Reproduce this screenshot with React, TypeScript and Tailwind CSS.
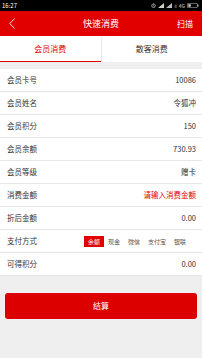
import React from 'react';

const FONT = { fontFamily: '"Noto Sans CJK SC", "Noto Sans", sans-serif' };

const rows: { label: string; value: string; hint?: boolean; pay?: boolean }[] = [
  { label: '会员卡号', value: '10086' },
  { label: '会员姓名', value: '令狐冲' },
  { label: '会员积分', value: '150' },
  { label: '会员余额', value: '730.93' },
  { label: '会员等级', value: '赠卡' },
  { label: '消费金额', value: '请输入消费金额', hint: true },
  { label: '折后金额', value: '0.00' },
  { label: '支付方式', value: '', pay: true },
  { label: '可得积分', value: '0.00' },
];

const payMethods = ['余额', '现金', '微信', '支付宝', '银联'];

function StatusBar() {
  return (
    <div className="flex h-[11px] items-center justify-between bg-black pl-[2px] pr-[3px] text-[6px] leading-none text-white">
      <span>16:27</span>
      <div className="flex items-center gap-[2px] text-[#cfcfcf]">
        <svg width="5" height="5" viewBox="0 0 10 10" fill="none" stroke="currentColor" strokeWidth="1.4">
          <circle cx="5" cy="5.5" r="3.6" />
          <path d="M5 3.5v2.2l1.3 1" />
        </svg>
        <svg width="6" height="5" viewBox="0 0 12 10" fill="currentColor">
          <path d="M0 10L12 0v10z" />
        </svg>
        <svg width="6" height="5" viewBox="0 0 12 10" fill="currentColor">
          <path d="M0 10L12 0v10z" opacity="0.9" />
        </svg>
        <span className="text-[4px]">ll</span>
        <span className="text-[5px]">4G</span>
        <svg width="12" height="5" viewBox="0 0 24 10" fill="none" stroke="currentColor" strokeWidth="1.2">
          <rect x="0.6" y="0.6" width="20" height="8.8" rx="2" />
          <rect x="21" y="3" width="2" height="4" fill="currentColor" stroke="none" />
          <rect x="2.5" y="2.5" width="5" height="5" fill="currentColor" stroke="none" />
        </svg>
      </div>
    </div>
  );
}

export default function App() {
  return (
    <div className="h-[358px] w-[202px] overflow-hidden bg-[#efefef]" style={FONT}>
      <StatusBar />

      <div className="relative flex h-[25px] items-center justify-center bg-[#e00000] text-white">
        <svg className="absolute left-[9px] top-[7px]" width="6" height="11" viewBox="0 0 6 11" fill="none" stroke="white" strokeWidth="0.9">
          <path d="M5.5 0.5L0.8 5.5l4.7 5" />
        </svg>
        <span className="text-[9px] leading-none">快速消费</span>
        <span className="absolute right-[9px] text-[8px] leading-none">扫描</span>
      </div>

      <div className="flex h-[26px] bg-white text-[8px]">
        <div className="flex flex-1 items-center justify-center border-b border-[#e00000] text-[#e00000]">会员消费</div>
        <div className="my-[1px] w-px bg-[#e8e8e8]" />
        <div className="flex flex-1 items-center justify-center text-[#333333]">散客消费</div>
      </div>

      <div className="mt-[7px] bg-white">
        {rows.map((r) => (
          <div
            key={r.label}
            className="flex h-[23px] items-center justify-between border-b border-[#e6e6e6] pl-[7px] pr-[6px] text-[7.5px] text-[#333333]"
          >
            <span>{r.label}</span>
            {r.pay ? (
              <div className="mr-[6px] flex items-center text-[6px] text-[#555555]">
                {payMethods.map((m, i) => (
                  <span
                    key={m}
                    className={
                      i === 0
                        ? 'flex h-[11px] items-center bg-[#e00000] px-[4px] text-white'
                        : 'flex h-[11px] items-center px-[4px]'
                    }
                  >
                    {m}
                  </span>
                ))}
              </div>
            ) : (
              <span className={r.hint ? 'text-[#e00000]' : ''}>{r.value}</span>
            )}
          </div>
        ))}
      </div>

      <div className="mx-[5px] mt-[17px] flex h-[26px] items-center justify-center rounded-[3px] bg-[#dc0000] text-[8px] text-white">
        结算
      </div>
    </div>
  );
}
